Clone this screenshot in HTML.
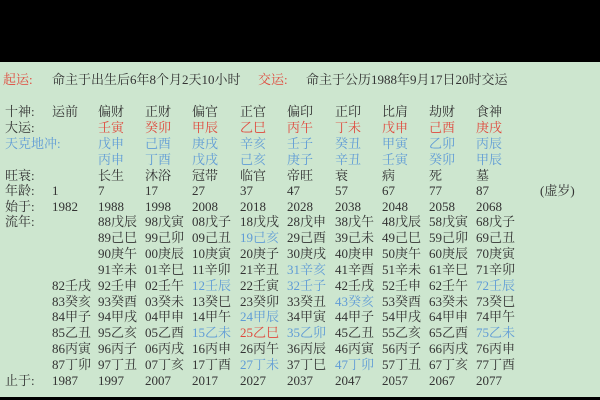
<!DOCTYPE html>
<html><head><meta charset="utf-8"><style>
html,body{margin:0;padding:0;width:600px;height:400px;overflow:hidden;background:#000}
#g{position:absolute;left:0;top:62px;width:600px;height:335px;background:#cde6cf}
.r{position:absolute;left:0;height:16px;line-height:16px;font-family:"Liberation Serif","Noto Serif CJK SC",serif;font-size:13px;color:#333;white-space:nowrap}
.r span{position:absolute;top:0}
.red{color:#e0483c}.blue{color:#5f9bd6}
</style></head><body>
<div id="g"></div>
<div id="c"></div>
<script>
const X=[5,52,98,145,192,240,287,335,382,429,476];
let top0=[112,128,144,160,176,191,207];
let html='';
function row(y,cells){html+='<div class="r" style="top:'+(y-8)+'px">';cells.forEach((c,i)=>{if(c===null||c==='')return;let cls='';let t=c;if(typeof c==='object'){cls=c[1];t=c[0];}html+='<span class="'+cls+'" style="left:'+(i<X.length?X[i]:c[2])+'px">'+t+'</span>';});html+='</div>';}
html+='<div class="r" style="top:72px"><span class="red" style="left:3px">起运:</span><span style="left:52px">命主于出生后6年8个月2天10小时</span><span class="red" style="left:258px">交运:</span><span style="left:306px">命主于公历1988年9月17日20时交运</span></div>';
row(112,['十神:','运前','偏财','正财','偏官','正官','偏印','正印','比肩','劫财','食神']);
row(128,['大运:','',['壬寅','red'],['癸卯','red'],['甲辰','red'],['乙巳','red'],['丙午','red'],['丁未','red'],['戊申','red'],['己酉','red'],['庚戌','red']]);
row(144,[['天克地冲:','blue'],'',['戊申','blue'],['己酉','blue'],['庚戌','blue'],['辛亥','blue'],['壬子','blue'],['癸丑','blue'],['甲寅','blue'],['乙卯','blue'],['丙辰','blue']]);
row(160,['','',['丙申','blue'],['丁酉','blue'],['戊戌','blue'],['己亥','blue'],['庚子','blue'],['辛丑','blue'],['壬寅','blue'],['癸卯','blue'],['甲辰','blue']]);
row(176,['旺衰:','','长生','沐浴','冠带','临官','帝旺','衰','病','死','墓']);
html+='<div class="r" style="top:183px"><span style="left:5px">年龄:</span><span style="left:52px">1</span><span style="left:98px">7</span><span style="left:145px">17</span><span style="left:192px">27</span><span style="left:240px">37</span><span style="left:287px">47</span><span style="left:335px">57</span><span style="left:382px">67</span><span style="left:429px">77</span><span style="left:476px">87</span><span style="left:540px">(虚岁)</span></div>';
row(207,['始于:','1982','1988','1998','2008','2018','2028','2038','2048','2058','2068']);
const gz=['戊','己','庚','辛','壬','癸','甲','乙','丙','丁'];
const zhi=['辰','巳','午','未','申','酉','戌','亥','子','丑','寅','卯'];
// column start years and branch index for first entry (戊)
const starts=[[88,0],[98,10],[8,8],[18,6],[28,4],[38,2],[48,0],[58,10],[68,8]];
const blue={'19':1,'12':1,'15':1,'24':1,'27':1,'31':1,'32':1,'35':1,'43':1,'47':1,'72':1,'75':1};
const ys=[222,238,254,270,286,302,317,333,349,365];
for(let k=0;k<10;k++){
 let cells=[k==0?'流年:':''];
 // col0
 if(k>=4){const c0=['82壬戌','83癸亥','84甲子','85乙丑','86丙寅','87丁卯'];cells.push(c0[k-4]);}else cells.push('');
 starts.forEach(([y0,b])=>{let yy=(y0+k)%100;let s=(yy<10?'0':'')+yy;let t=s+gz[k]+zhi[(b+k)%12];let cls=s==='25'?'red':(blue[s]?'blue':'');cells.push(cls?[t,cls]:t);});
 row(ys[k],cells);
}
row(381,['止于:','1987','1997','2007','2017','2027','2037','2047','2057','2067','2077']);
document.getElementById('c').innerHTML=html;
</script>
</body></html>
